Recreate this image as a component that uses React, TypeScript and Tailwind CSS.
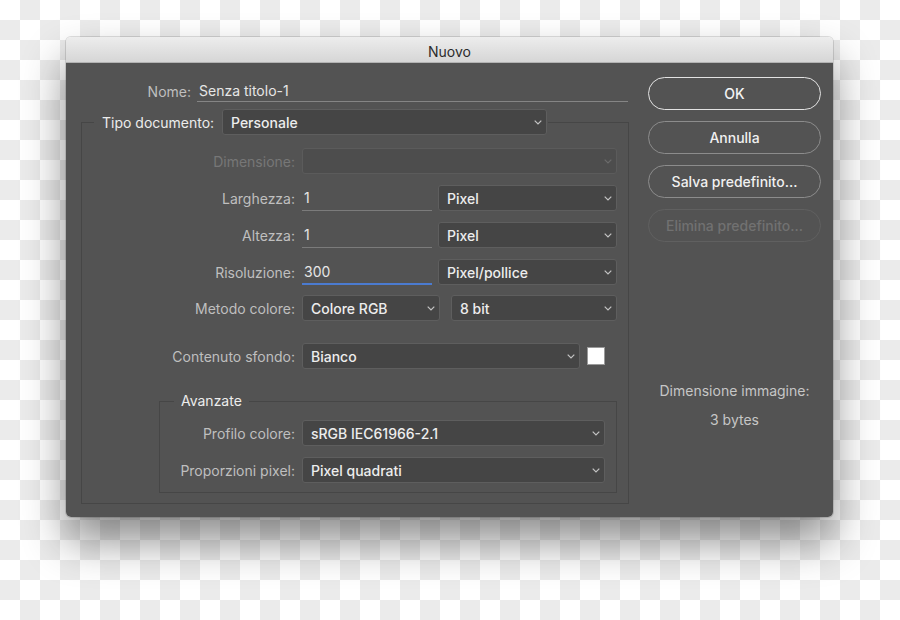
import React from 'react';

// Photoshop "Nuovo" (new document) dialog on a transparency checkerboard

const Chevron: React.FC<{ dim?: boolean }> = ({ dim }) => (
  <svg width="8" height="5" viewBox="0 0 8 5" className={dim ? 'text-[#6b6b6b]' : 'text-[#c4c4c4]'}>
    <path d="M0.7 0.7 L4 4 L7.3 0.7" fill="none" stroke="currentColor" strokeWidth="1.2" />
  </svg>
);

interface SelectProps {
  value?: string;
  className: string;
  disabled?: boolean;
}

const Select: React.FC<SelectProps> = ({ value, className, disabled }) => (
  <div
    className={`flex h-[26px] shrink-0 items-center justify-between rounded-[3px] border pl-[8px] pr-[4px] ${
      disabled ? 'border-[#5b5b5b] bg-[#4d4d4d]' : 'border-[#5e5e5e] bg-[#454545]'
    } ${className}`}
  >
    <span className="whitespace-nowrap text-[14px] font-medium text-[#ededed]">{value}</span>
    <Chevron dim={disabled} />
  </div>
);

const Input: React.FC<{ value: string; focused?: boolean }> = ({ value, focused }) => (
  <div
    className={`flex h-[26px] w-[130px] shrink-0 items-center pl-[2px] text-[14px] text-[#e6e6e6] ${
      focused ? 'border-b-2 border-[#4b7bd0]' : 'border-b border-[#7b7b7b]'
    }`}
  >
    {value}
  </div>
);

const Row: React.FC<{ label: string; labelW: string; dim?: boolean; children?: React.ReactNode }> = ({
  label,
  labelW,
  dim,
  children,
}) => (
  <div className="flex h-[26px] items-center gap-[7px]">
    <div
      className={`${labelW} shrink-0 whitespace-nowrap text-right text-[14px] ${
        dim ? 'text-[#777777]' : 'text-[#bfbfbf]'
      }`}
    >
      {label}
    </div>
    {children}
  </div>
);

const DialogButton: React.FC<{ label: string; variant?: 'primary' | 'normal' | 'disabled' }> = ({
  label,
  variant = 'normal',
}) => {
  const styles = {
    primary: 'border-[1.5px] border-[#e2e2e2] text-[#f4f4f4]',
    normal: 'border border-[#8c8c8c] text-[#f0f0f0]',
    disabled: 'border border-[#606060] text-[#717171]',
  }[variant];
  return (
    <div
      className={`flex h-[33px] w-[173px] items-center justify-center whitespace-nowrap rounded-full text-[14px] font-medium ${styles}`}
    >
      {label}
    </div>
  );
};

export default function App() {
  return (
    <div className="h-[620px] w-[900px] overflow-hidden bg-[conic-gradient(#ebebeb_25%,#ffffff_0_50%,#ebebeb_0_75%,#ffffff_0)] bg-[length:40px_40px] pl-[66px] pt-[37px] font-[Inter,'Noto_Sans',sans-serif]">
      <div className="flex h-[480px] w-[767px] flex-col overflow-hidden rounded-[5px] shadow-[0_24px_44px_rgba(0,0,0,0.45),0_0_0_1px_rgba(0,0,0,0.12)]">
        {/* title bar */}
        <div className="flex h-[26px] shrink-0 items-center justify-center border-b border-[#b3b3b3] bg-gradient-to-b from-[#ededed] to-[#d6d6d6] pt-[3px] text-[14px] text-[#2b2b2b]">
          Nuovo
        </div>

        <div className="flex flex-1 bg-[#535353] pl-[15px]">
          {/* left column */}
          <div className="w-[548px] pt-[17px]">
            <div className="flex items-end">
              <div className="w-[110px] text-right text-[14px] leading-[21px] text-[#bfbfbf]">Nome:</div>
              <div className="ml-[6px] w-[431px] border-b border-[#858585] pl-[2px] text-[14px] leading-[21px] text-[#e6e6e6]">
                Senza titolo-1
              </div>
            </div>

            <fieldset className="mt-[7px] w-[548px] border border-[#464646] pb-[10px]">
              <legend className="ml-[12px] flex items-center pl-[8px] pr-[1px]">
                <span className="mr-[7px] w-[113px] whitespace-nowrap text-[14px] text-[#ececec]">Tipo documento:</span>
                <Select value="Personale" className="w-[325px]" />
              </legend>

              <div className="mt-[13px] flex flex-col">
                <Row label="Dimensione:" labelW="w-[213px]" dim>
                  <Select className="w-[315px]" disabled />
                </Row>
                <div className="mt-[11px]">
                  <Row label="Larghezza:" labelW="w-[213px]">
                    <Input value="1" />
                    <Select value="Pixel" className="ml-[-1px] w-[179px]" />
                  </Row>
                </div>
                <div className="mt-[11px]">
                  <Row label="Altezza:" labelW="w-[213px]">
                    <Input value="1" />
                    <Select value="Pixel" className="ml-[-1px] w-[179px]" />
                  </Row>
                </div>
                <div className="mt-[11px]">
                  <Row label="Risoluzione:" labelW="w-[213px]">
                    <Input value="300" focused />
                    <Select value="Pixel/pollice" className="ml-[-1px] w-[179px]" />
                  </Row>
                </div>
                <div className="mt-[10px]">
                  <Row label="Metodo colore:" labelW="w-[213px]">
                    <Select value="Colore RGB" className="w-[138px]" />
                    <Select value="8 bit" className="ml-[4px] w-[166px]" />
                  </Row>
                </div>
                <div className="mt-[22px]">
                  <Row label="Contenuto sfondo:" labelW="w-[213px]">
                    <Select value="Bianco" className="w-[278px]" />
                    <div className="h-[18px] w-[18px] border border-[#9a9a9a] bg-white" />
                  </Row>
                </div>

                <fieldset className="ml-[77px] mt-[23px] w-[458px] border border-[#464646] pb-[9px]">
                  <legend className="ml-[14px] px-[7px] text-[14px] leading-[18px] text-[#ececec]">Avanzate</legend>
                  <div className="mt-[10px]">
                    <Row label="Profilo colore:" labelW="w-[135px]">
                      <Select value="sRGB IEC61966-2.1" className="w-[303px]" />
                    </Row>
                  </div>
                  <div className="mt-[11px]">
                    <Row label="Proporzioni pixel:" labelW="w-[135px]">
                      <Select value="Pixel quadrati" className="w-[303px]" />
                    </Row>
                  </div>
                </fieldset>
              </div>
            </fieldset>
          </div>

          {/* right column */}
          <div className="ml-[19px] flex w-[173px] flex-col pt-[14px]">
            <div className="flex flex-col gap-[11px]">
              <DialogButton label="OK" variant="primary" />
              <DialogButton label="Annulla" />
              <DialogButton label="Salva predefinito..." />
              <DialogButton label="Elimina predefinito..." variant="disabled" />
            </div>
            <div className="mt-[139px] text-center text-[14px] leading-[20px] text-[#c6c6c6]">Dimensione immagine:</div>
            <div className="mt-[9px] text-center text-[14px] leading-[20px] text-[#c6c6c6]">3 bytes</div>
          </div>
        </div>
      </div>
    </div>
  );
}
